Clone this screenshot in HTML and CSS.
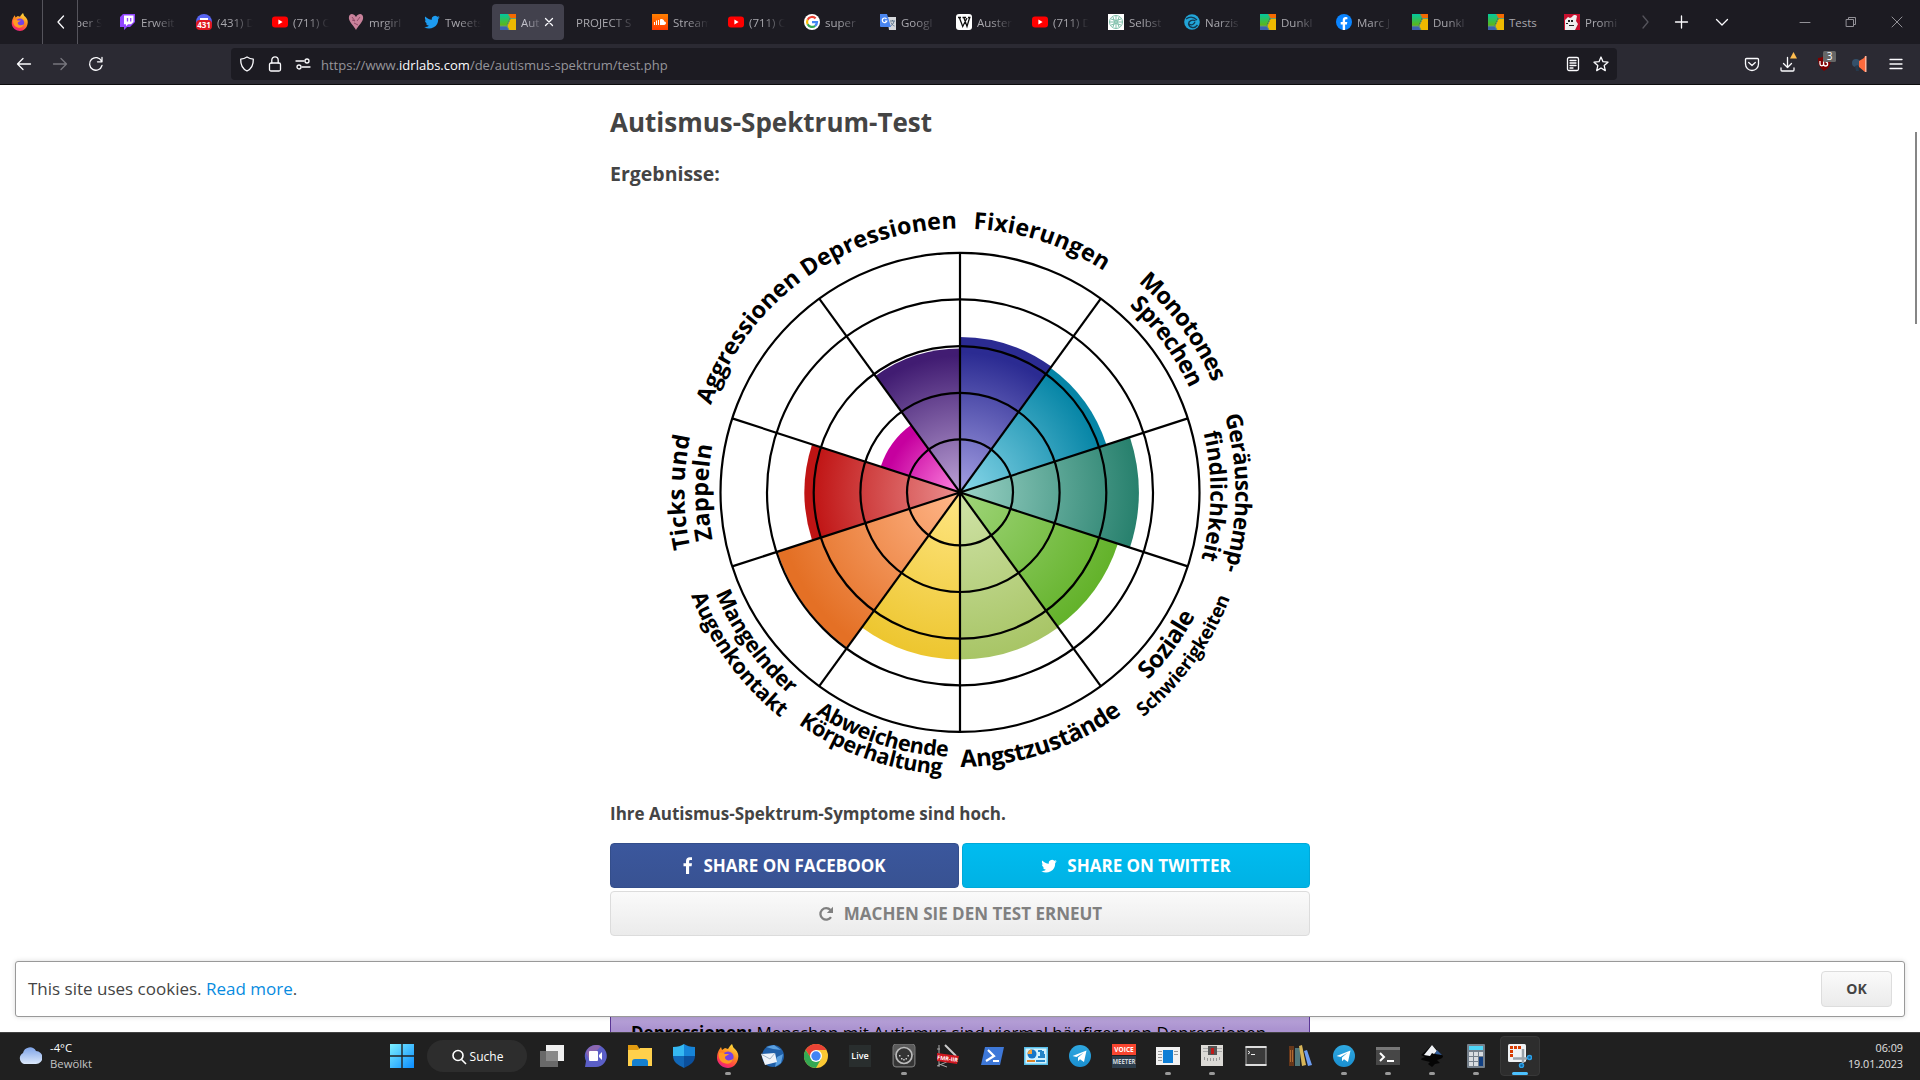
FILE: index.html
```html
<!DOCTYPE html>
<html lang="de">
<head>
<meta charset="utf-8">
<title>Autismus-Spektrum-Test</title>
<link rel="stylesheet" href="styles.css">
</head>
<body>
<svg class="sprite" width="0" height="0">
  <defs>
    <linearGradient id="fxBody" x1=".8" y1="0" x2=".3" y2="1"><stop offset="0" stop-color="#ffe640"/><stop offset=".45" stop-color="#ff8a1e"/><stop offset=".8" stop-color="#ff3750"/><stop offset="1" stop-color="#e0218a"/></linearGradient>
    <linearGradient id="idrGreen" x1="0" y1="0" x2="0" y2="1"><stop offset="0" stop-color="#00c8a0"/><stop offset="1" stop-color="#6cb400"/></linearGradient>
    <linearGradient id="sc" x1="0" y1="0" x2="0" y2="1"><stop offset="0" stop-color="#ff8000"/><stop offset="1" stop-color="#ff3a00"/></linearGradient>
    <linearGradient id="win" x1="0" y1="0" x2="1" y2="1"><stop offset="0" stop-color="#7df0ff"/><stop offset="1" stop-color="#0a8cff"/></linearGradient>
    <linearGradient id="tg" x1="0" y1="0" x2="0" y2="1"><stop offset="0" stop-color="#2fa8e0"/><stop offset="1" stop-color="#1a8fd0"/></linearGradient>
    <symbol id="firefox" viewBox="0 0 24 24"><path fill="url(#fxBody)" d="M3 6l2-3 1 3 3-2 3 1c1-2 2-3 4-5 1 2 1 4 3 5 3 3 4 6 3 10-1 5-5 9-10 9S1 20 1 14c0-4 1-6 2-8z"/><circle cx="12" cy="13" r="5.6" fill="#7542e5"/><path fill="#ff9a22" d="M3 9c3-1 5 0 6 1h4c-1 2-4 1-4 4 1 3 5 3 8 1-1 4-5 6-9 4-4-1-6-6-5-10z"/></symbol>
    <symbol id="youtube" viewBox="0 0 16 16"><rect y="2.5" width="16" height="11" rx="3" fill="#f00"/><path fill="#fff" d="M6.4 5.6v4.8l4.2-2.4z"/></symbol>
    <symbol id="idr" viewBox="0 0 16 16"><path fill="url(#idrGreen)" d="M0 0h8l2 4-4 9H0z"/><path fill="#f46a00" d="M8 0h8v4h-6z"/><path fill="#edb900" d="M10.500 5H16v11H9l-2-4z"/><path fill="#3d62ad" d="M0 12h7l2 4H0z"/><path fill="none" stroke="#68a070" d="M8 0l2.400 4.500L7 12l2 4M10.400 4.500H16M0 12h7"/></symbol>
    <symbol id="tweet" viewBox="0 0 24 24"><path fill="currentColor" d="M23.600 4.900c-.9.400-1.800.700-2.700.8 1-.6 1.700-1.500 2.100-2.600-.9.500-1.900.9-3 1.100A4.800 4.800 0 0 0 11.800 8.600C7.900 8.400 4.300 6.500 2 3.600c-1.300 2.200-.6 5 1.500 6.400-.8 0-1.500-.2-2.200-.6 0 2.300 1.600 4.300 3.800 4.800-.7.200-1.400.2-2.100.1.600 1.900 2.400 3.300 4.500 3.300A9.600 9.600 0 0 1 .4 19.600 13.500 13.500 0 0 0 21.200 7.400c.9-.7 1.700-1.500 2.400-2.500z"/></symbol>
    <symbol id="telegram" viewBox="0 0 24 24"><circle cx="12" cy="12" r="11" fill="url(#tg)"/><path fill="#fff" d="M4.500 12L18.500 6.400 16 18l-4-2.800-2 2v-3.600l5.500-4.800-7 4.300z"/></symbol>
  </defs>
</svg>

<header class="tabs">
  <div class="pinned"><svg width="18" height="18"><use href="#firefox"/></svg></div>
  <div class="scroller"><svg width="16" height="16" class="line bright"><path d="M11.500 2L6 8l5.500 6"/></svg></div>
  <div class="strip">
    <div class="tab cut"><span class="label">ber S</span></div>
    <div class="tab"><svg class="fav" viewBox="0 0 16 16"><path fill="#9146ff" d="M3 0L0 3v10h4v3l3-3h3l5-5V0z"/><path fill="#fff" d="M4 1.500h9.500V8L11 10.300H8L6 12.200v-1.900H4z"/><path stroke="#9146ff" stroke-width="1.300" d="M7.500 4v3.500M10.700 4v3.500"/></svg><span class="label">Erweit</span></div>
    <div class="tab"><svg class="fav" viewBox="0 0 16 16"><circle cx="8" cy="8" r="8" fill="#5865f2"/><path fill="#fff" d="M4 4h8v4H4z"/><rect y="6" width="16" height="10" rx="4" fill="#e01820"/><text x="8" y="14" class="badge431">431</text></svg><span class="label">(431) D</span></div>
    <div class="tab"><svg class="fav"><use href="#youtube"/></svg><span class="label">(711) C</span></div>
    <div class="tab"><svg class="fav" viewBox="0 0 16 16"><path fill="#c9829b" d="M8 3C5-2 0 0 1 5c1 4 5 7 7 11 2-4 6-7 7-11 1-5-4-7-7-2z"/><path stroke="#8e4a66" fill="none" d="M4 3l3 4M12 3L9 7M6 9l4 2M4 6l3 1"/></svg><span class="label">mrgirl</span></div>
    <div class="tab"><svg class="fav blue"><use href="#tweet"/></svg><span class="label">Tweets</span></div>
    <div class="tab active"><svg class="fav"><use href="#idr"/></svg><span class="label">Aut</span><svg class="line bright close" width="10" height="10"><path d="M1.500 1.500l7 7M8.500 1.500l-7 7"/></svg></div>
    <div class="tab"><span class="label wide">PROJECT S</span></div>
    <div class="tab"><svg class="fav" viewBox="0 0 16 16"><path fill="url(#sc)" d="M0 0h16v16H0z"/><path fill="#fff" d="M8 11V5.500c2-1 4 0 4.300 2 2-.2 2.600 3-.3 3.500z"/><path stroke="#fff" d="M2.500 8v3M4.500 6.500V11M6.500 6v5"/></svg><span class="label">Stream</span></div>
    <div class="tab"><svg class="fav"><use href="#youtube"/></svg><span class="label">(711) C</span></div>
    <div class="tab"><svg class="fav" viewBox="0 0 16 16"><circle cx="8" cy="8" r="8" fill="#fff"/><g fill="none" stroke-width="2.200"><path stroke="#ea4335" d="M3.600 5.700a5 5 0 0 1 8-1.300"/><path stroke="#fbbc05" d="M3.600 5.700a5 5 0 0 0 0 4.600"/><path stroke="#34a853" d="M3.600 10.300a5 5 0 0 0 7.600 1.500"/><path stroke="#4285f4" d="M11.200 11.800A5 5 0 0 0 13 8.100H8"/></g></svg><span class="label">super</span></div>
    <div class="tab"><svg class="fav" viewBox="0 0 16 16"><path fill="#d6d8dc" d="M7 3h9v13H9z"/><path fill="#4a86f0" d="M0 0h7l4 13H1a1 1 0 0 1-1-1z"/><path fill="none" stroke="#fff" stroke-width="1.200" d="M6.500 5a2.300 2.300 0 1 0 .3 2H5"/><path fill="none" stroke="#607890" d="M10 7h5M12.500 6v1M14 7c-.5 3-2 4-3.500 5M11 8.500c1 2 2 3 3.500 3.500"/></svg><span class="label">Googl</span></div>
    <div class="tab"><svg class="fav" viewBox="0 0 16 16"><rect width="16" height="16" rx="3" fill="#fff"/><path fill="none" stroke="#111" stroke-width="1.300" d="M2 3.500h3M6.500 3.500H10M12 3.500h2.500M3.500 4l3.200 8.500L11 4M8 4l3 8.500L13.500 4"/></svg><span class="label">Auster</span></div>
    <div class="tab"><svg class="fav"><use href="#youtube"/></svg><span class="label">(711) D</span></div>
    <div class="tab"><svg class="fav" viewBox="0 0 16 16"><path fill="#fff" d="M0 0h16v16H0z"/><g fill="none" stroke="#7fbfaa"><circle cx="8" cy="8" r="6.500"/><path d="M8 1v14M1.500 8h13M5 3q3 5 0 10M11 3q-3 5 0 10M3 5q5 3 10 0M3 11q5-3 10 0"/></g></svg><span class="label">Selbst</span></div>
    <div class="tab"><svg class="fav" viewBox="0 0 16 16"><circle cx="8" cy="8" r="7.800" fill="#22a5d8"/><path fill="none" stroke="#123a52" stroke-width="1.300" d="M2 5c4-3 8-2 11 1M13.500 11c-3 4-8 3-9-1 0-3 4-5 7-3M5 10c3 2 5 0 6-2"/></svg><span class="label">Narzis</span></div>
    <div class="tab"><svg class="fav"><use href="#idr"/></svg><span class="label">Dunkl</span></div>
    <div class="tab"><svg class="fav" viewBox="0 0 16 16"><circle cx="8" cy="8" r="8" fill="#0a84ff"/><path fill="#fff" d="M6.700 16v-5.600h-2V8h2V6.300c0-2.100 1.200-3.200 3-3.200l1.700.1v2h-1c-1 0-1.300.6-1.300 1.200V8h2.200l-.4 2.400H9.100V16z"/></svg><span class="label">Marc J</span></div>
    <div class="tab"><svg class="fav"><use href="#idr"/></svg><span class="label">Dunkl</span></div>
    <div class="tab"><svg class="fav"><use href="#idr"/></svg><span class="label full">Tests</span></div>
    <div class="tab"><svg class="fav" viewBox="0 0 16 16"><path fill="#c8102e" d="M0 0h16v16H0z"/><path fill="#eee" d="M1 6l3-3 2 1 2-1a3 3 0 0 1 5-1l-1 5 2 3-3 6H1z"/><path fill="#222" d="M4 6h2v2H4zM2 9h2v1H2zM7 6h2v2H7zM5 11h5v1H5z"/></svg><span class="label">Promi</span></div>
  </div>
  <div class="tabtools">
    <svg width="26" height="16" class="line dim"><path d="M11 2l5 6-5 6"/></svg>
    <svg width="16" height="16" class="line bright"><path d="M8.500 2v12M2.500 8h12"/></svg>
    <svg width="16" height="16" class="line bright"><path d="M2.500 5.500L8 11l5.500-5.500"/></svg>
  </div>
  <div class="winbuttons">
    <svg width="12" height="12" class="line grey"><path d="M1 6.500h10"/></svg>
    <svg width="12" height="12" class="line grey"><path d="M1.500 3.500h7v7h-7zM3.500 3V1.500h7v7H9"/></svg>
    <svg width="12" height="12" class="line grey"><path d="M1 1l10 10M11 1L1 11"/></svg>
  </div>
</header>

<nav class="toolbar">
  <div class="navbuttons">
    <svg width="16" height="16" class="line bright"><path d="M14.500 8h-13M7 2.500L1.500 8 7 13.500"/></svg>
    <svg width="16" height="16" class="line dim2"><path d="M1.500 8h13M9 2.500L14.500 8 9 13.500"/></svg>
    <svg width="16" height="16" class="line bright"><path d="M13.500 5A6.300 6.300 0 1 0 14 9.500M14 1.500v4.300H9.500"/></svg>
  </div>
  <div class="urlbar">
    <svg width="16" height="16" class="line bright"><path d="M8 1c2 1.300 4 2 6.300 2.200C14.500 9 12 13 8 15 4 13 1.500 9 1.700 3.200 4 3 6 2.300 8 1z"/></svg>
    <svg width="16" height="16" class="line bright"><rect x="2.500" y="7" width="11" height="8" rx="1.500"/><path d="M4.800 7V4a3.200 3.200 0 0 1 6.400 0v3"/></svg>
    <svg width="16" height="16" class="line bright"><path d="M1 5h8M7 11h8"/><circle cx="12" cy="5" r="2"/><circle cx="4" cy="11" r="2"/></svg>
    <span class="url">https://www.<b>idrlabs.com</b>/de/autismus-spektrum/test.php</span>
    <svg width="16" height="16" class="line bright"><rect x="2.500" y="1.500" width="11" height="13" rx="1.500"/><path d="M5 4.500h6M5 7h6M5 9.500h6M5 12h3"/></svg>
    <svg width="16" height="16" class="line bright"><path d="M8 1l2 4.700 5 .5-3.800 3.400 1.100 5L8 12l-4.300 2.600 1.100-5L1 6.200l5-.5z"/></svg>
  </div>
  <div class="addons">
    <svg width="16" height="16" class="line bright"><path d="M2.500 2.500h11a1 1 0 0 1 1 1V8a6.500 6.500 0 0 1-13 0V3.500a1 1 0 0 1 1-1zM4.700 6.500L8 9.500l3.300-3"/></svg>
    <svg class="downloads" width="20" height="24"><path class="line bright" d="M9.500 5.500v10M5.500 11.500l4 4 4-4M3 16v2a1 1 0 0 0 1 1h11a1 1 0 0 0 1-1v-2"/><path fill="#ffbd4f" d="M15.500 0l3.500 6.500h-7z"/></svg>
    <svg class="blocker" width="24" height="26"><path fill="#800000" d="M4 7c3 0 4-1 6-2 2 1 4 2 7 2 0 7-2 10-7 13-4-3-6-6-6-13z"/><path fill="none" stroke="#fff" stroke-width="1.300" d="M6 10v3a1.800 1.800 0 0 0 3.600 0v-3M9.600 13a2 2 0 1 0 2-2"/><rect x="9" y="0" width="13" height="11" rx="1.500" fill="#666"/><text x="15.500" y="9.300" class="count">3</text></svg>
    <svg class="horn" width="18" height="18"><circle cx="5" cy="8" r="4" fill="#34506a"/><path fill="#26394c" d="M4 11l3-1 1 6H5z"/><path fill="#ff6a3c" d="M8 6l5-3 1-2v16l-6-5z"/><path fill="#ffb49c" d="M14 1h1.500v16H14z"/></svg>
    <svg class="burger line bright" width="16" height="16"><path d="M2 3.500h12M2 8h12M2 12.500h12"/></svg>
  </div>
</nav>

<main class="page">
  <article class="content">
    <h1>Autismus-Spektrum-Test</h1>
    <h2>Ergebnisse:</h2>
    <svg class="wheel" viewBox="-350 -292.4 700 584" width="700" height="584">
      <defs>
        <radialGradient id="g0" gradientUnits="userSpaceOnUse" cx="0" cy="0" r="1"><stop offset="0" stop-color="#a5a0e4"/><stop offset=".9" stop-color="#2b2b92"/></radialGradient>
        <radialGradient id="g1" gradientUnits="userSpaceOnUse" cx="0" cy="0" r="1"><stop offset="0" stop-color="#8ad8ea"/><stop offset=".95" stop-color="#0685a6"/></radialGradient>
        <radialGradient id="g2" gradientUnits="userSpaceOnUse" cx="0" cy="0" r="1"><stop offset="0" stop-color="#9bd3c6"/><stop offset="1" stop-color="#27806d"/></radialGradient>
        <radialGradient id="g3" gradientUnits="userSpaceOnUse" cx="0" cy="0" r="1"><stop offset="0" stop-color="#a0d57a"/><stop offset="1" stop-color="#63b22a"/></radialGradient>
        <radialGradient id="g4" gradientUnits="userSpaceOnUse" cx="0" cy="0" r="1"><stop offset="0" stop-color="#d0e3a8"/><stop offset="1" stop-color="#a8c566"/></radialGradient>
        <radialGradient id="g5" gradientUnits="userSpaceOnUse" cx="0" cy="0" r="1"><stop offset="0" stop-color="#ffe684"/><stop offset="1" stop-color="#edc62f"/></radialGradient>
        <radialGradient id="g6" gradientUnits="userSpaceOnUse" cx="0" cy="0" r="1"><stop offset="0" stop-color="#ffb68a"/><stop offset=".95" stop-color="#e47025"/></radialGradient>
        <radialGradient id="g7" gradientUnits="userSpaceOnUse" cx="0" cy="0" r="1"><stop offset="0" stop-color="#ea8f8f"/><stop offset=".95" stop-color="#c01414"/></radialGradient>
        <radialGradient id="g8" gradientUnits="userSpaceOnUse" cx="0" cy="0" r="1"><stop offset="0" stop-color="#ff86e0"/><stop offset=".9" stop-color="#c6009f"/></radialGradient>
        <radialGradient id="g9" gradientUnits="userSpaceOnUse" cx="0" cy="0" r="1"><stop offset="0" stop-color="#bda2d6"/><stop offset=".95" stop-color="#411c72"/></radialGradient>
        <path id="slice" d="M0 0V-1A1 1 0 0 1 .5878-.809Z"/>
        <path id="cw250" d="M0-250.500A250.500 250.500 0 0 1 0 250.500"/>
        <path id="cw252" d="M0-252A252 252 0 0 1 0 252"/>
        <path id="cw264" d="M0-264A264 264 0 0 1 0 264"/>
        <path id="cw275" d="M0-275.500A275.500 275.500 0 0 1 0 275.500"/>
        <path id="cc264" d="M0-264.500A264.500 264.500 0 0 0 0 264.500"/>
        <path id="cc265" d="M0-265.500A265.500 265.500 0 0 0 0 265.500"/>
        <path id="cc273" d="M0-274.500A274.500 274.500 0 0 0 0 274.500"/>
        <path id="cc282" d="M0-282.500A282.500 282.500 0 0 0 0 282.500"/>
        <path id="cc288" d="M0-288A288 288 0 0 0 0 288"/>
        <path id="cc290" d="M0-290A290 290 0 0 0 0 290"/>
      </defs>
      <use href="#slice" fill="url(#g0)" transform="scale(155.500)"/>
      <use href="#slice" fill="url(#g1)" transform="rotate(36) scale(154)"/>
      <use href="#slice" fill="url(#g2)" transform="rotate(72) scale(178.700)"/>
      <use href="#slice" fill="url(#g3)" transform="rotate(108) scale(166)"/>
      <use href="#slice" fill="url(#g4)" transform="rotate(144) scale(167)"/>
      <use href="#slice" fill="url(#g5)" transform="rotate(180) scale(167)"/>
      <use href="#slice" fill="url(#g6)" transform="rotate(216) scale(192)"/>
      <use href="#slice" fill="url(#g7)" transform="rotate(252) scale(155.500)"/>
      <use href="#slice" fill="url(#g8)" transform="rotate(288) scale(83.400)"/>
      <use href="#slice" fill="url(#g9)" transform="rotate(324) scale(144)"/>
      <g class="grid">
        <circle r="239.500"/><circle r="193"/><circle r="146.300"/><circle r="99.600"/><circle r="53"/>
        <path d="M0-239.500v479"/>
        <path d="M0-239.500v479" transform="rotate(36)"/>
        <path d="M0-239.500v479" transform="rotate(72)"/>
        <path d="M0-239.500v479" transform="rotate(108)"/>
        <path d="M0-239.500v479" transform="rotate(144)"/>
      </g>
      <circle r="3" fill="#000"/>
      <g class="names">
        <text transform="rotate(2.900)" textLength="139"><textPath href="#cw264">Fixierungen</textPath></text>
        <text transform="rotate(40.300)" textLength="126"><textPath href="#cw275">Monotones</textPath></text>
        <text transform="rotate(42.200)" textLength="103"><textPath href="#cw252">Sprechen</textPath></text>
        <text transform="rotate(73.800)" textLength="157" class="mid"><textPath href="#cw275">Geräuschemp-</textPath></text>
        <text transform="rotate(76.200)" textLength="128" class="mid"><textPath href="#cw250">findlichkeit</textPath></text>
        <text transform="rotate(134.900)" textLength="80" class="big"><textPath href="#cc265">Soziale</textPath></text>
        <text transform="rotate(140.800)" textLength="149" class="small"><textPath href="#cc290">Schwierigkeiten</textPath></text>
        <text transform="rotate(179.900)" textLength="173" class="big"><textPath href="#cc273">Angstzustände</textPath></text>
        <text transform="rotate(213.100)" textLength="141" class="low"><textPath href="#cc264">Abweichende</textPath></text>
        <text transform="rotate(214.900)" textLength="154" class="low"><textPath href="#cc282">Körperhaltung</textPath></text>
        <text transform="rotate(247.500)" textLength="126" class="low"><textPath href="#cc264">Mangelnder</textPath></text>
        <text transform="rotate(249)" textLength="153" class="low"><textPath href="#cc288">Augenkontakt</textPath></text>
        <text transform="rotate(258.300)" textLength="113"><textPath href="#cw275">Ticks und</textPath></text>
        <text transform="rotate(259.200)" textLength="95"><textPath href="#cw252">Zappeln</textPath></text>
        <text transform="rotate(289.300)" textLength="156"><textPath href="#cw264">Aggressionen</textPath></text>
        <text transform="rotate(324.600)" textLength="160"><textPath href="#cw264">Depressionen</textPath></text>
      </g>
    </svg>
    <p class="verdict">Ihre Autismus-Spektrum-Symptome sind hoch.</p>
    <div class="share">
      <a class="btn facebook"><svg width="10" height="17" viewBox="0 0 10 17"><path fill="#fff" d="M3 17V9.300H.5V6.200H3V4.100C3 1.600 4.500.2 6.800.2L9 .3V3H7.500C6.300 3 6.100 3.600 6.100 4.400v1.800H9l-.4 3.100H6.100V17z"/></svg>SHARE ON FACEBOOK</a>
      <a class="btn twitter"><svg width="16" height="16"><use href="#tweet"/></svg>SHARE ON TWITTER</a>
      <a class="btn again"><svg width="16" height="16" viewBox="0 0 16 16"><path fill="none" stroke="#808080" stroke-width="2.300" d="M12.500 4A5.800 5.800 0 1 0 13 11.200"/><path fill="#808080" d="M15 .8v6.200H8.800z"/></svg>MACHEN SIE DEN TEST ERNEUT</a>
    </div>
    <p class="trait"><b>Depressionen:</b> Menschen mit Autismus sind viermal häufiger von Depressionen</p>
  </article>
  <div class="scrollbar"></div>
  <aside class="cookies"><span>This site uses cookies. <a>Read more</a>.</span><button>OK</button></aside>
</main>

<footer class="taskbar">
  <div class="weather">
    <svg width="24" height="20" viewBox="0 0 24 20"><defs><linearGradient id="cl" x1="0" y1="0" x2="0" y2="1"><stop offset="0" stop-color="#7fa4e8"/><stop offset="1" stop-color="#dce9fb"/></linearGradient></defs><path fill="url(#cl)" d="M6 19a6 6 0 0 1-1-11A7 7 0 0 1 18 6a6.500 6.500 0 0 1 0 13z"/></svg>
    <span>-4°C<br><i>Bewölkt</i></span>
  </div>
  <div class="apps">
    <div class="app"><svg width="24" height="24"><path fill="url(#win)" d="M0 0h11.300v11.300H0zM12.700 0H24v11.300H12.700zM0 12.700h11.300V24H0zM12.700 12.700H24V24H12.700z"/></svg></div>
    <div class="search"><svg width="16" height="16" fill="none" stroke="#fff" stroke-width="1.600"><circle cx="7" cy="6.500" r="5"/><path d="M10.500 10.500L15 15"/></svg>Suche</div>
    <div class="app"><svg width="24" height="24"><path fill="#f0f0f0" d="M6 1h18v16H6z"/><path fill="#777" fill-opacity=".85" d="M0 7h18v16H0z"/></svg></div>
    <div class="app"><svg width="24" height="24"><path fill="#5b5fc7" d="M1 23l1-6A11 11 0 1 1 12 23z"/><path fill="#8c66b0" d="M2 9a11 11 0 0 1 15-7L5 15z"/><rect x="5" y="7" width="9" height="10" rx="1" fill="#fff"/><path fill="#fff" d="M15 11l3-3v8l-3-3z"/></svg></div>
    <div class="app"><svg width="24" height="24"><path fill="#e29b10" d="M0 1h9l2 3v5H0z"/><path fill="#ffd04c" d="M0 6h10l2-2h12v18H0z"/><path fill="#1580d0" d="M4 22v-4a3 3 0 0 1 3-3h10a3 3 0 0 1 3 3v4z"/></svg></div>
    <div class="app"><svg width="24" height="24"><path fill="#35b8f2" d="M12 0v12H1V3c5 0 8-1 11-3z"/><path fill="#1684d8" d="M12 0c3 2 6 3 11 3v9H12z"/><path fill="#1268b8" d="M1 12h11v12C6 21 1 18 1 12z"/><path fill="#0b4f9c" d="M23 12H12v12c6-3 11-6 11-12z"/></svg></div>
    <div class="app run"><svg width="24" height="24"><use href="#firefox"/></svg></div>
    <div class="app"><svg width="24" height="24"><circle cx="13" cy="12" r="11" fill="#1f5fa8"/><path fill="#5ba0e0" d="M6 3l8-2 7 5-8-1zM17 13l6-3-2 9-6 4z"/><path fill="#eef3fa" d="M1 10l14-1 2 9-12 3z"/><path fill="none" stroke="#a0b4c8" d="M1 10l9 5 5-6"/></svg></div>
    <div class="app"><svg width="24" height="24"><circle cx="12" cy="12" r="12" fill="#fcc934"/><path fill="#ea4335" d="M1.600 6a12 12 0 0 1 20.800 0H12L7 14z"/><path fill="#34a853" d="M1.600 6A12 12 0 0 0 12 24l5-9-10-1z"/><circle cx="12" cy="12" r="6" fill="#fff"/><circle cx="12" cy="12" r="4.700" fill="#4285f4"/></svg></div>
    <div class="app"><svg width="24" height="24"><path fill="#292e2e" d="M1 1h22v22H1z"/><text x="12" y="15" class="live">Live</text></svg></div>
    <div class="app run"><svg width="24" height="24"><rect x="1" width="22" height="23" rx="3" fill="#5a5a5a" stroke="#777"/><path fill="#353535" d="M2 11h20v9a2 2 0 0 1-2 2H4a2 2 0 0 1-2-2z"/><circle cx="12" cy="11.500" r="8" fill="#333" stroke="#bbb" stroke-width="1.700"/><path fill="#ccc" d="M7 11h1.500v1.500H7zM15.500 11H17v1.500h-1.500zM9 14h1.500v1.500H9zM13.500 14H15v1.500h-1.500zM11.200 15h1.500v1.500h-1.500z"/></svg></div>
    <div class="app"><svg width="26" height="24"><path stroke="#ccc" stroke-width="2" d="M10 1l11 11" fill="none"/><path stroke="#aaa" d="M4 1v9M2 5h3M4 17v6M4 20l8 3M2 22l12-5" fill="none"/><path fill="#d01820" d="M2 9l22 3-2 8-20-3z"/><text x="12.500" y="16.500" class="fmtxt" transform="rotate(7 12 15)">FMR-IIR</text></svg></div>
    <div class="app"><svg width="24" height="24"><path fill="#3e78d8" d="M5 3h19l-4 18H1z"/><path fill="none" stroke="#fff" stroke-width="2.200" d="M8 6l6 6-8 5M13 17h6"/></svg></div>
    <div class="app"><svg width="24" height="24"><path fill="#58bfea" d="M0 3h24v18H0z"/><path fill="#d2f2ff" d="M1.500 4.500h21v15h-21z"/><circle cx="8" cy="10" r="4.500" fill="#1676c8"/><path fill="#f6a23c" d="M8 5.500V10H3.500A4.500 4.500 0 0 1 8 5.500z"/><path fill="none" stroke="#2585c8" stroke-width="2" d="M14 7h3v6M19 7v4h2M14 13h7"/><path stroke="#dc8328" stroke-width="2" d="M3 17h8"/><path stroke="#2585c8" stroke-width="2" d="M12 17h9"/></svg></div>
    <div class="app"><svg width="24" height="24"><use href="#telegram"/></svg></div>
    <div class="app"><svg width="24" height="24"><path fill="#f8452f" d="M0 0h24v11H0z"/><path fill="#2d3d4b" d="M0 12h24v12H0z"/><text x="12" y="8.300" class="voice">VOICE</text><text x="12" y="20.300" class="voice pale" textLength="23" lengthAdjust="spacingAndGlyphs">MEETER</text></svg></div>
    <div class="app run"><svg width="24" height="24"><path fill="#f2f2f2" d="M0 3h24v18H0z"/><path fill="#0f7fd6" d="M7 6h10v13H7z"/><path stroke="#999" d="M2 7.500h4M2 10.500h4M2 13.500h4M2 16.500h4M18 7.500h4M18 10.500h4"/></svg></div>
    <div class="app run"><svg width="24" height="24"><path fill="#dcdad6" d="M1 1h22v21H1z"/><path fill="#555" d="M8 2h9v9H8z"/><path fill="#c01818" d="M11 4h3v6h-3z"/><path stroke="#aaa" d="M3 4.500h5M17 4.500h5M3 7.500h5M17 7.500h5"/><path stroke="#999" d="M4.500 13v3M7.500 14v3M10.500 14v3M13.500 14v3M16.500 14v3M19.500 13v3"/></svg></div>
    <div class="app"><svg width="24" height="24"><path fill="#3a3a3a" stroke="#aaa" d="M2 2.500h20v19H2z"/><path stroke="#ddd" stroke-width="2" d="M1.500 3h21M1.500 21h21"/><path fill="none" stroke="#eee" d="M4 7l2 1.500L4 10M7 10.500h4"/></svg></div>
    <div class="app"><svg width="24" height="24"><path fill="#66371a" d="M1 2h5v20H1z"/><path fill="#51777a" d="M7 4h5v18H7z"/><path fill="#d8b558" d="M11 2l3-1 4 20-4 1z"/><path fill="#6c9cf0" d="M16 7l3-1 5 15-4 1z"/><path stroke="#b06a30" d="M2.500 6v12M4.500 6v12"/></svg></div>
    <div class="app run"><svg width="24" height="24"><use href="#telegram"/></svg></div>
    <div class="app run"><svg width="24" height="24"><path fill="#474747" d="M0 3h24v18H0z"/><path fill="#777" d="M0 3h24v3H0z"/><path fill="none" stroke="#fff" stroke-width="2" d="M4 9l4 4-4 4M11 17h7"/></svg></div>
    <div class="app run"><svg width="24" height="24"><path fill="#050505" d="M12 1l11 11c0 3-4 3-6 4l3 3-5 1-3 3-4-3 2-2-8-2c-2-1 0-2 3-3l-4-2z"/><path fill="#f0f2f6" d="M12 1l5 6-3 3-2-1-2 3-6-1z"/><path fill="#345f9c" d="M17 6l5 5-7-1z"/></svg></div>
    <div class="app run"><svg width="24" height="24"><rect x="3" width="18" height="24" rx="1" fill="#75808b"/><path fill="#4ed6f8" d="M5 2h14v4H5z"/><path fill="#d9dde1" d="M5 8h4v4H5zM10 8h4v4h-4zM15 8h4v4h-4zM5 13h4v4H5zM10 13h4v4h-4zM5 18h4v4H5zM10 18h4v4h-4z"/><path fill="#113f82" d="M15 13h4v9h-4z"/></svg></div>
    <div class="app current"><svg width="24" height="24"><rect width="18" height="18" rx="1.500" fill="#f0f2f4"/><path fill="none" stroke="#d83b01" stroke-width="3" stroke-dasharray="3 1" d="M3.500 13V3.500H14"/><path fill="none" stroke="#9aa2aa" stroke-width="2.500" d="M15 5v14M5 14.500h14"/><circle cx="21.500" cy="13.500" r="2" fill="#155f95" stroke="#2aa0e8" stroke-width="1.500"/><circle cx="13.500" cy="21.500" r="2" fill="#155f95" stroke="#2aa0e8" stroke-width="1.500"/></svg></div>
  </div>
  <div class="clock">06:09<br>19.01.2023</div>
</footer>
</body>
</html>
```
FILE: styles.css
```css
* { box-sizing: border-box; }
body {
  margin: 0;
  width: 1920px;
  height: 1080px;
  overflow: hidden;
  display: flex;
  flex-direction: column;
  background: #fff;
  font-family: "Open Sans", "Noto Sans", sans-serif;
}
svg { display: block; flex: none; }
.sprite { position: absolute; }

.line { fill: none; stroke-width: 1.3; stroke-linecap: round; stroke-linejoin: round; }
.bright { stroke: #fbfbfe; }
.dim { stroke: #55545c; }
.dim2 { stroke: #77767e; }
.grey { stroke: #929197; stroke-width: 1; }

/* tab strip */
.tabs { height: 44px; flex: none; display: flex; background: #1c1b22; }
.pinned { width: 43px; padding-right: 2px; border-right: 1px solid #55545c; display: flex; align-items: center; justify-content: center; }
.scroller { width: 35px; border-right: 1px solid #55545c; display: flex; align-items: center; justify-content: center; }
.strip { width: 1554px; display: flex; gap: 4px; padding: 4px 0; overflow: hidden; }
.tab { width: 72px; height: 36px; flex: none; padding: 0 8px; display: flex; align-items: center; gap: 5px; color: #a9a8ae; border-radius: 4px; }
.tab.cut { width: 30px; padding: 0; }
.tab.active { background: #42414d; color: #c4c3cc; }
.fav { width: 16px; height: 16px; }
.blue { color: #1d9bf0; }
.label { flex: none; width: 40px; white-space: nowrap; font-size: 11.5px; line-height: 18px; padding-top: 1px; mask-image: linear-gradient(to right, #000 14px, transparent 36px); }
.full { mask-image: none; }
.cut .label { width: 30px; margin-left: -3px; mask-image: linear-gradient(to right, #000 8px, transparent 27px); }
.wide { width: 62px; mask-image: linear-gradient(to right, #000 36px, transparent 60px); }
.active .label { width: 20px; mask-image: linear-gradient(to right, #000 4px, transparent 23px); }
.close { margin-left: -2px; }
.badge431 { font: bold 8px "Open Sans", sans-serif; fill: #fff; text-anchor: middle; }
.tabtools { display: flex; align-items: center; width: 130px; gap: 25px; }
.tabtools svg:first-child { margin-right: -10px; }
.winbuttons { flex: 1; display: flex; align-items: center; justify-content: flex-end; gap: 34px; padding-right: 17px; }

/* navigation bar */
.toolbar { height: 41px; flex: none; display: flex; align-items: center; background: #2b2a33; border-bottom: 1px solid #0c0c0d; }
.navbuttons { width: 231px; display: flex; gap: 20px; padding-left: 16px; }
.urlbar { width: 1386px; height: 32px; border-radius: 4px; background: #1c1b22; display: flex; align-items: center; gap: 12px; padding: 0 8px; }
.url { flex: 1; margin-left: -2px; padding-top: 2px; font-size: 13.02px; color: #96959b; }
.url b { font-weight: 400; color: #fbfbfe; }
.addons { flex: 1; display: flex; align-items: center; justify-content: flex-end; padding-right: 16px; }
.downloads { margin-left: 18px; }
.blocker { margin-left: 16px; }
.horn { margin-left: 13px; }
.burger { margin-left: 19px; }
.count { font: 10px "Open Sans", sans-serif; fill: #fff; text-anchor: middle; }

/* page */
.page { position: relative; flex: 1; min-height: 0; overflow: hidden; }
.content { width: 700px; margin: 0 auto; color: #444; }
h1 { margin: 0; padding-top: 18px; font-size: 26px; line-height: 38px; font-weight: 700; }
h2 { margin: 19px 0 0; font-size: 19.5px; line-height: 28px; font-weight: 700; }
.wheel { margin-top: 12px; }
.grid { fill: none; stroke: #000; stroke-width: 2.2; }
.names { font-size: 23.3px; font-weight: 700; fill: #000; }
.names .big { font-size: 24px; }
.names .mid { font-size: 22.5px; }
.names .low { font-size: 21.5px; }
.names .small { font-size: 19px; }
.verdict { margin: 18px 0 0; font-size: 17px; line-height: 24px; font-weight: 700; }
.share { display: grid; grid-template-columns: 349px 348px; gap: 3px; margin-top: 17px; }
.btn { height: 45px; display: flex; align-items: center; justify-content: center; gap: 10px; border-radius: 4px; font-size: 17px; font-weight: 700; color: #fff; }
.facebook { background: linear-gradient(#3b579d, #385292); border: 1px solid #344e8b; }
.twitter { background: linear-gradient(#00bcf0, #00b2e4); border: 1px solid #00a9d8; }
.again { grid-column: 1 / 3; background: linear-gradient(#fafafa, #ebebeb); border: 1px solid #dcdcdc; color: #808080; }
.trait { height: 120px; margin: 64px 0 0; padding: 20px; border: 1px solid #5a3696; background: linear-gradient(#cbb9e4, #ab93d0 28px, #a78dcc); color: #000; font-size: 17px; line-height: 24px; white-space: nowrap; }
.trait b { font-weight: 700; }
.scrollbar { position: absolute; right: 3px; top: 47px; width: 2px; height: 192px; background: #868686; }
.cookies { position: absolute; left: 15px; right: 15px; top: 876px; height: 56px; padding: 0 12px; display: flex; align-items: center; justify-content: space-between; background: #fff; border: 1px solid #999; border-radius: 3px; box-shadow: 0 0 5px rgba(0, 0, 0, .15); color: #444; font-size: 17px; }
.cookies span { padding-bottom: 2px; }
.cookies a { color: #078be0; }
.cookies button { width: 71px; height: 36px; padding-bottom: 2px; border: 1px solid #ddd; border-radius: 4px; background: linear-gradient(#fafafa, #ebebeb); color: #444; font: 700 14px "Open Sans", sans-serif; }

/* taskbar */
.taskbar { height: 48px; flex: none; display: flex; align-items: center; background: #202020; border-top: 1px solid #424242; color: #fff; font-size: 11.3px; line-height: 16px; }
.weather { width: 380px; padding-left: 18px; display: flex; align-items: center; gap: 8px; }
.weather svg { margin-top: -3px; }
.weather span { padding-bottom: 2px; }
.weather i { font-style: normal; color: #c4c4c4; }
.apps { display: flex; height: 47px; }
.app { width: 44px; display: flex; flex-direction: column; align-items: center; justify-content: center; position: relative; }
.app svg { margin-top: -1px; }
.run::after, .current::after { content: ""; position: absolute; bottom: 5px; width: 6px; height: 3px; border-radius: 2px; background: #999; }
.current { width: 40px; height: 40px; margin: 3px 2px; background: #2d2d2d; border: 1px solid #383838; border-radius: 4px; }
.current::after { width: 16px; bottom: 0; background: #4cc2ff; }
.search { width: 100px; height: 32px; margin: 7px 3px 0; border-radius: 16px; background: #2d2d2d; display: flex; align-items: center; justify-content: center; gap: 3px; padding-top: 1px; font-size: 12px; }
.live { font: 600 9px "Open Sans", sans-serif; fill: #fff; text-anchor: middle; }
.fmtxt { font: bold 5.5px "Open Sans", sans-serif; fill: #fff; text-anchor: middle; }
.voice { font: bold 6.5px "Open Sans", sans-serif; fill: #fff; text-anchor: middle; }
.pale { fill: #cfd6dc; }
.clock { flex: 1; padding: 0 17px 2px 0; text-align: right; color: #e0e0e0; font-size: 10.8px; }
```
